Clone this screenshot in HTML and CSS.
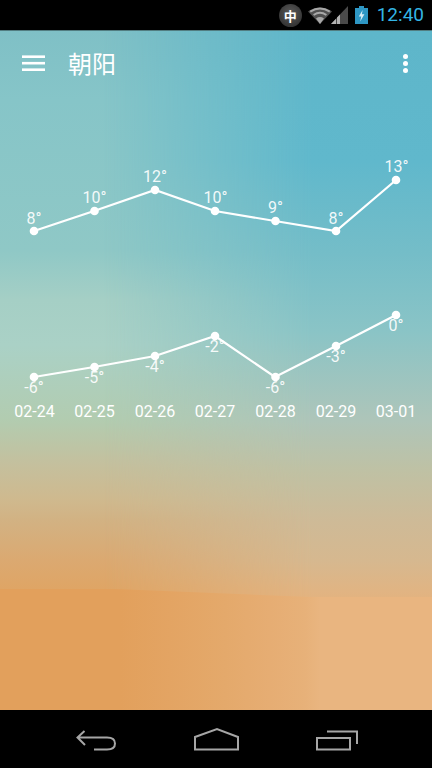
FILE: index.html
```html
<!DOCTYPE html>
<html lang="zh">
<head>
    <meta charset="UTF-8">
    <meta name="viewport" content="width=device-width, initial-scale=1.0">
    <title>朝阳</title>
    <link rel="stylesheet" href="styles.css">
</head>
<body>
    <div class="status-bar">
        <span class="ime-badge">中</span>
        <svg class="wifi-icon" width="24" height="18" viewBox="0 0 24 18">
            <path d="M12 18 L0 5.5 Q12 -2.5 24 5.5 Z" fill="#505050"/>
            <path d="M2.2 5.6 Q12 -0.6 21.8 5.6" fill="none" stroke="#a8a8a8" stroke-width="2"/>
            <path d="M5.6 9 Q12 4.6 18.4 9" fill="none" stroke="#a8a8a8" stroke-width="2"/>
            <path d="M12 18 L8 12.4 Q12 9.6 16 12.4 Z" fill="#a8a8a8"/>
        </svg>
        <svg class="signal-icon" width="17" height="18" viewBox="0 0 17 18">
            <path d="M0 18 L17 0 V18 Z" fill="#4a4a4a"/>
            <path d="M0 18 L5 12.7 V18 Z M6 18 V11.6 L9 8.5 V18 Z" fill="#b4b4b4"/>
        </svg>
        <svg class="battery-icon" width="13" height="18" viewBox="0 0 13 18">
            <path d="M4 0 H9 V2 H13 V18 H0 V2 H4 Z" fill="#2e97c4"/>
            <path d="M7.6 4 L3.8 10.4 H6.2 L5.2 15.5 L9.4 8.2 H6.9 Z" fill="#d8eef7"/>
        </svg>
        <span class="clock">12:40</span>
    </div>

    <main class="weather">
        <header class="toolbar">
            <svg class="menu-icon" width="23" height="16" viewBox="0 0 23 16">
                <rect y="0.4" width="23" height="2.6"/>
                <rect y="6.9" width="23" height="2.6"/>
                <rect y="13.4" width="23" height="2.6"/>
            </svg>
            <h1 class="city">朝阳</h1>
            <div class="more-icon"><span></span><span></span><span></span></div>
        </header>

        <svg class="chart" viewBox="0 98 432 612" width="432" height="612">
            <polyline class="line" points="34,231 94,211 155,190 215,211 275,221 336,231 396,180"/>
            <g class="dots">
                <circle cx="34" cy="231" r="4.3"/><circle cx="94.5" cy="211" r="4.3"/><circle cx="155" cy="190" r="4.3"/>
                <circle cx="215" cy="211" r="4.3"/><circle cx="275.5" cy="221" r="4.3"/><circle cx="336" cy="231" r="4.3"/>
                <circle cx="396" cy="180" r="4.3"/>
            </g>
            <g class="temps">
                <text x="34" y="224">8°</text><text x="94.5" y="203">10°</text><text x="155" y="182">12°</text>
                <text x="215.5" y="203">10°</text><text x="275.5" y="213">9°</text><text x="336" y="224">8°</text>
                <text x="396.5" y="172">13°</text>
            </g>

            <polyline class="line" points="34,377 94,367 155,356 215,336 275,377 336,346 396,315"/>
            <g class="dots">
                <circle cx="34" cy="377" r="4.3"/><circle cx="94.5" cy="367" r="4.3"/><circle cx="155" cy="356" r="4.3"/>
                <circle cx="215" cy="336" r="4.3"/><circle cx="275.5" cy="377" r="4.3"/><circle cx="336" cy="346" r="4.3"/>
                <circle cx="396" cy="315" r="4.3"/>
            </g>
            <g class="temps">
                <text x="34" y="393">-6°</text><text x="94.5" y="383">-5°</text><text x="155" y="372">-4°</text>
                <text x="215" y="352">-2°</text><text x="275.5" y="393">-6°</text><text x="336" y="362">-3°</text>
                <text x="396" y="331">0°</text>
            </g>

            <g class="dates">
                <text x="34.5" y="417">02-24</text><text x="94.5" y="417">02-25</text><text x="155" y="417">02-26</text>
                <text x="215" y="417">02-27</text><text x="275.5" y="417">02-28</text><text x="336" y="417">02-29</text>
                <text x="396" y="417">03-01</text>
            </g>
        </svg>
    </main>

    <nav class="nav-bar">
        <svg width="40" height="24" viewBox="0 0 40 24">
            <path d="M8.5 4 L1.5 10.5 L9 18 M1.5 10.5 H31 Q39 10.5 39 16.5 Q39 22.5 31 22.5 H18"/>
        </svg>
        <svg width="45" height="24" viewBox="0 0 45 24">
            <path d="M1 10 L23 2 L44 10 V22.5 H1 Z"/>
        </svg>
        <svg width="42" height="24" viewBox="0 0 42 24">
            <path d="M1 11 H34 V22.5 H1 Z"/>
            <path d="M11 4.5 H41 V17"/>
        </svg>
    </nav>
</body>
</html>
```

FILE: styles.css
```css
* {
    box-sizing: border-box;
}
body {
    width: 432px;
    height: 768px;
    margin: 0;
    display: flex;
    flex-direction: column;
    overflow: hidden;
    background-color: black;
    font-family: Roboto, "Noto Sans CJK SC", sans-serif;
}
.status-bar {
    height: 30px;
    flex: none;
    display: flex;
    align-items: center;
    justify-content: flex-end;
    padding-right: 8px;
    background-color: black;
}
.ime-badge {
    width: 23px;
    height: 23px;
    margin-right: 6px;
    border-radius: 50%;
    background: radial-gradient(circle at 50% 40%, #5c5c5c, #262626);
    color: white;
    font-family: "Noto Sans CJK SC", sans-serif;
    font-size: 13px;
    font-weight: 700;
    line-height: 23px;
    text-align: center;
}
.wifi-icon {
    margin-right: -1px;
}
.signal-icon {
    margin-right: 7px;
}
.battery-icon {
    margin-right: 9px;
}
.clock {
    color: #33b5e5;
    font-size: 19px;
    line-height: 30px;
}

/* left edge colours; the right edge colours are faded in by ::before */
.weather {
    height: 680px;
    flex: none;
    position: relative;
    background: linear-gradient(180deg, #7fc0c6 0, #86c5c8 70px, #8fc8c6 220px, #a5cfc5 270px, #aad1c6 315px, #b2ccb0 390px, #c4c09e 433px, #cfb98e 470px, #d2b283 490px, #dba971 530px, #dfa565 559px);
    box-shadow: inset 0 1px rgba(0, 0, 0, 0.35);
}
.weather::before {
    content: "";
    position: absolute;
    inset: 1px 0 0 0;
    background: linear-gradient(180deg, #5eb6ca 0, #60b8cc 130px, #74bdc8 220px, #8ac4c6 300px, #aec5b9 390px, #bfc1a4 440px, #ceba97 490px, #d6b88f 530px, #e3b380 567px);
    -webkit-mask-image: linear-gradient(90deg, transparent 24%, black 72%);
    mask-image: linear-gradient(90deg, transparent 24%, black 72%);
}
/* flat orange block at the bottom */
.weather::after {
    content: "";
    position: absolute;
    left: 0;
    right: 0;
    bottom: 0;
    height: 121px;
    background: linear-gradient(90deg, #e2a05c 120px, #e3a463 170px, #e4a96b 225px, #e6ad73 270px, #e7b179 305px, #e9b580 320px);
    clip-path: polygon(0 0, 115px 0, 310px 8px, 100% 8px, 100% 100%, 0 100%);
}
.toolbar, .chart {
    position: relative;
    z-index: 1;
}
.toolbar {
    height: 68px;
    display: flex;
    align-items: center;
    padding: 0 24px 0 22px;
}
.menu-icon {
    margin-top: -2px;
    fill: white;
}
.city {
    flex: 1;
    margin: -4px 0 0 23px;
    color: white;
    font-family: "Noto Sans CJK SC", sans-serif;
    font-size: 24px;
    font-weight: 400;
}
.more-icon {
    display: flex;
    flex-direction: column;
    gap: 2px;
    margin-top: -1px;
}
.more-icon span {
    width: 5px;
    height: 5px;
    border-radius: 50%;
    background-color: white;
}
.chart {
    display: block;
}
.line {
    fill: none;
    stroke: white;
    stroke-width: 2.2;
}
.dots {
    fill: white;
}
.temps, .dates {
    fill: white;
    font-size: 16px;
    text-anchor: middle;
}
.temps {
    fill: rgba(255, 255, 255, 0.92);
}
.nav-bar {
    height: 58px;
    flex: none;
    display: flex;
    align-items: center;
    justify-content: space-between;
    padding: 0 74px 0 76px;
    background-color: black;
}
.nav-bar path {
    fill: none;
    stroke: #a6a6a6;
    stroke-width: 2;
}
```
